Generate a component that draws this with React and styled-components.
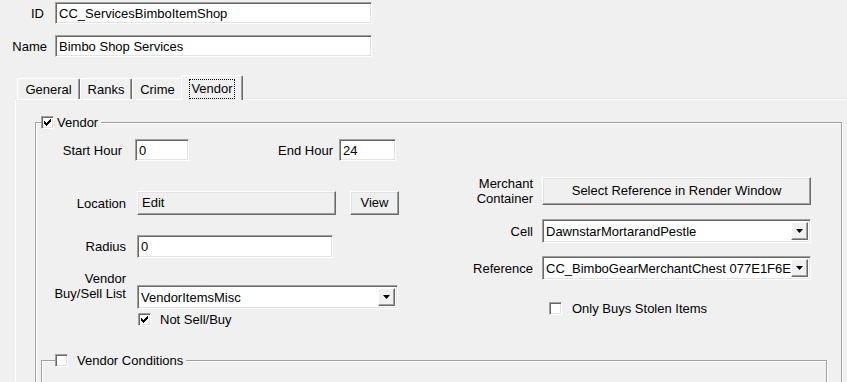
import React from 'react';
import styled, { createGlobalStyle } from 'styled-components';

const GlobalStyle = createGlobalStyle`
  html, body {
    margin: 0;
    padding: 0;
    background: #f0f0f0;
    overflow: hidden;
  }
  body {
    font-family: "Liberation Sans", Arial, sans-serif;
    font-size: 13px;
    color: #000;
  }
`;

const Dialog = styled.div`
  width: 847px;
  height: 382px;
  overflow: hidden;
`;

const HeaderGrid = styled.div`
  display: grid;
  grid-template-columns: 47px 317px;
  column-gap: 8px;
  row-gap: 11px;
  padding-top: 2px;
  align-items: center;
`;

const Label = styled.div`
  text-align: right;
  white-space: nowrap;
  line-height: 15px;
  padding-right: ${(p) => p.$pr || 0}px;
`;

const TextBox = styled.div`
  box-sizing: border-box;
  width: ${(p) => p.$w}px;
  height: ${(p) => p.$h || 22}px;
  margin-left: ${(p) => p.$ml || 0}px;
  background: #fff;
  border: 1px solid;
  border-color: #a0a0a0 #fff #fff #a0a0a0;
  box-shadow: inset 1px 1px 0 #696969, inset -1px -1px 0 #e3e3e3;
  padding: 0 3px;
  display: flex;
  align-items: center;
  white-space: nowrap;
  overflow: hidden;
`;

const TabStrip = styled.div`
  display: flex;
  align-items: flex-end;
  height: 25px;
  margin-top: 18px;
  margin-bottom: -1px;
  padding-left: 17px;
  position: relative;
  z-index: 1;
`;

const Tab = styled.div`
  box-sizing: border-box;
  width: ${(p) => p.$w}px;
  height: ${(p) => (p.$active ? 25 : 21)}px;
  margin: ${(p) => (p.$active ? '0 -2px' : '0 0 1px')};
  background: #f0f0f0;
  border-top: 1px solid #fff;
  border-left: 1px solid #fff;
  border-right: 1px solid #696969;
  box-shadow: inset -1px 0 0 #a0a0a0;
  border-radius: 2px 2px 0 0;
  display: flex;
  align-items: ${(p) => (p.$active ? 'flex-start' : 'center')};
  padding-top: ${(p) => (p.$active ? 3 : 0)}px;
  justify-content: center;
  position: relative;
  z-index: ${(p) => (p.$active ? 2 : 1)};
`;

const Focus = styled.span`
  border: 1px dotted #000;
  padding: 1px 1px 2px;
  line-height: 15px;
`;

const Panel = styled.div`
  margin-left: 15px;
  width: 845px;
  height: 300px;
  border-top: 1px solid #fff;
  border-left: 1px solid #fff;
  box-shadow: 0 -1px 0 #e3e3e3;
  padding: 22px 0 0 19px;
`;

const GroupBox = styled.div`
  position: relative;
  box-sizing: border-box;
  width: ${(p) => p.$w}px;
  height: ${(p) => p.$h}px;
  margin-top: ${(p) => p.$mt || 0}px;
  margin-left: ${(p) => p.$ml || 0}px;
  border: 1px solid #a0a0a0;
  box-shadow: inset 1px 1px 0 #fff, 1px 1px 0 #fff;
`;

const Legend = styled.div`
  position: absolute;
  top: -7px;
  left: ${(p) => p.$left}px;
  display: flex;
  align-items: center;
  gap: ${(p) => p.$gap}px;
  padding-right: 3px;
  background: #f0f0f0;
  line-height: 13px;
`;

const Columns = styled.div`
  display: flex;
  padding-top: 16px;
`;

const LeftCol = styled.div`
  width: 384px;
  display: flex;
  flex-direction: column;
`;

const RightCol = styled.div`
  display: flex;
  flex-direction: column;
  padding-top: 37px;
`;

const Row = styled.div`
  display: flex;
  align-items: ${(p) => p.$align || 'center'};
  margin-top: ${(p) => p.$mt || 0}px;
  gap: ${(p) => p.$gap ?? 11}px;
`;

const FieldLabel = styled(Label)`
  width: ${(p) => p.$w}px;
  flex: none;
  margin-bottom: ${(p) => p.$mb || 0}px;
`;

const Button = styled.div`
  box-sizing: border-box;
  width: ${(p) => p.$w}px;
  height: ${(p) => p.$h || 24}px;
  margin-left: ${(p) => p.$ml || 0}px;
  background: #f0f0f0;
  border: 1px solid;
  border-color: #fff #696969 #696969 #fff;
  box-shadow: inset -1px -1px 0 #a0a0a0, inset 1px 1px 0 #e3e3e3;
  display: flex;
  align-items: center;
  justify-content: ${(p) => (p.$left ? 'flex-start' : 'center')};
  padding: 0 ${(p) => (p.$left ? 4 : 0)}px 1px;
  white-space: nowrap;
`;

const ComboWrap = styled(TextBox)`
  padding: 0 2px 0 3px;
  justify-content: space-between;
`;

const ComboText = styled.span`
  overflow: hidden;
  white-space: nowrap;
`;

const ArrowBtn = styled.div`
  flex: none;
  box-sizing: border-box;
  width: 17px;
  height: 18px;
  background: #f0f0f0;
  border: 1px solid;
  border-color: #fff #696969 #696969 #fff;
  box-shadow: inset -1px -1px 0 #a0a0a0;
  display: flex;
  align-items: center;
  justify-content: center;
`;

const CheckRow = styled.label`
  display: flex;
  align-items: center;
  gap: ${(p) => p.$gap || 8}px;
  margin-top: ${(p) => p.$mt || 0}px;
  margin-left: ${(p) => p.$ml || 0}px;
  line-height: 13px;
`;

const Box = styled.span`
  box-sizing: border-box;
  width: 13px;
  height: 13px;
  flex: none;
  background: #fff;
  border: 1px solid;
  border-color: #a0a0a0 #fff #fff #a0a0a0;
  box-shadow: inset 1px 1px 0 #696969, inset -1px -1px 0 #e3e3e3;
  display: flex;
  align-items: center;
  justify-content: center;
`;

function Check({ checked }) {
  return (
    <Box>
      {checked && (
        <svg width="9" height="9" viewBox="0 0 9 9" shapeRendering="crispEdges">
          <path d="M1 3h1v1h1v1h1V4h1V3h1V2h1V1h1v3H7v1H6v1H5v1H4v1H3V7H2V6H1z" fill="#000" />
        </svg>
      )}
    </Box>
  );
}

function Combo({ w, text }) {
  return (
    <ComboWrap $w={w} $h={24}>
      <ComboText>{text}</ComboText>
      <ArrowBtn>
        <svg width="7" height="4" viewBox="0 0 7 4">
          <polygon points="0,0 7,0 3.5,4" fill="#000" />
        </svg>
      </ArrowBtn>
    </ComboWrap>
  );
}

export default function App() {
  return (
    <Dialog>
      <GlobalStyle />
      <HeaderGrid>
        <Label $pr={3}>ID</Label>
        <TextBox $w={317}>CC_ServicesBimboItemShop</TextBox>
        <Label>Name</Label>
        <TextBox $w={317}>Bimbo Shop Services</TextBox>
      </HeaderGrid>

      <TabStrip>
        <Tab $w={63}>General</Tab>
        <Tab $w={52}>Ranks</Tab>
        <Tab $w={51}>Crime</Tab>
        <Tab $w={62} $active>
          <Focus>Vendor</Focus>
        </Tab>
      </TabStrip>

      <Panel>
        <GroupBox $w={807} $h={300}>
          <Legend $left={5} $gap={3}>
            <Check checked />
            <span>Vendor</span>
          </Legend>

          <Columns>
            <LeftCol>
              <Row>
                <FieldLabel $w={86}>Start Hour</FieldLabel>
                <TextBox $w={54} $ml={2}>0</TextBox>
                <FieldLabel $w={133}>End Hour</FieldLabel>
                <TextBox $w={57} $ml={-5}>24</TextBox>
              </Row>

              <Row $mt={30}>
                <FieldLabel $w={90}>Location</FieldLabel>
                <Button $w={199} $left>Edit</Button>
                <Button $w={49} $ml={3}>View</Button>
              </Row>

              <Row $mt={20}>
                <FieldLabel $w={90}>Radius</FieldLabel>
                <TextBox $w={196} $h={23}>0</TextBox>
              </Row>

              <Row $mt={13} $align="flex-end">
                <FieldLabel $w={90} $mb={8}>
                  Vendor
                  <br />
                  Buy/Sell List
                </FieldLabel>
                <Combo w={261} text="VendorItemsMisc" />
              </Row>

              <CheckRow $mt={4} $ml={102} $gap={9}>
                <Check checked />
                <span>Not Sell/Buy</span>
              </CheckRow>
            </LeftCol>

            <RightCol>
              <Row $gap={9}>
                <FieldLabel $w={113}>
                  Merchant
                  <br />
                  Container
                </FieldLabel>
                <Button $w={269} $h={28}>Select Reference in Render Window</Button>
              </Row>

              <Row $gap={9} $mt={13}>
                <FieldLabel $w={113}>Cell</FieldLabel>
                <Combo w={269} text="DawnstarMortarandPestle" />
              </Row>

              <Row $gap={9} $mt={13}>
                <FieldLabel $w={113}>Reference</FieldLabel>
                <Combo w={269} text="CC_BimboGearMerchantChest 077E1F6E" />
              </Row>

              <CheckRow $mt={22} $ml={129} $gap={10}>
                <Check />
                <span>Only Buys Stolen Items</span>
              </CheckRow>
            </RightCol>
          </Columns>

          <GroupBox $w={786} $h={80} $mt={34} $ml={5}>
            <Legend $left={13} $gap={9}>
              <Check />
              <span>Vendor Conditions</span>
            </Legend>
          </GroupBox>
        </GroupBox>
      </Panel>
    </Dialog>
  );
}
